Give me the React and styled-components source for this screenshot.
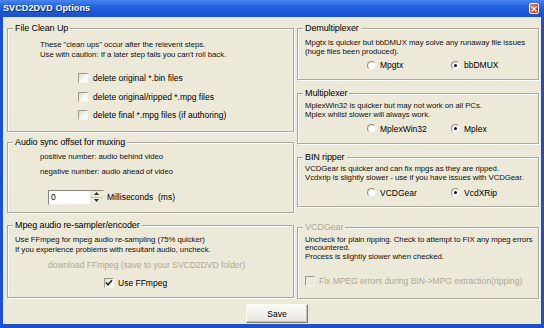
import React from 'react';
import styled, { createGlobalStyle } from 'styled-components';

const Global = createGlobalStyle`
  html, body { margin: 0; padding: 0; background: #ECE9D8; }
  body { font-family: "Liberation Sans", Arial, sans-serif; color: #000; }
  * { box-sizing: border-box; }
`;

const Window = styled.div`
  width: 544px;
  height: 328px;
  display: flex;
  flex-direction: column;
  background: #1B50D2;
`;

const TitleBar = styled.div`
  height: 17px;
  flex: none;
  display: flex;
  align-items: center;
  justify-content: space-between;
  padding: 0 5px 0 3px;
  background: linear-gradient(#4A86F0 0%, #2664DE 35%, #1C58D6 70%, #1A50CC 100%);
`;

const TitleText = styled.span`
  color: #fff;
  font-weight: bold;
  font-size: 9px;
  line-height: 11px;
  text-shadow: 1px 1px 0 #0F2E8A;
  letter-spacing: 0.1px;
`;

const CloseButton = styled.div`
  width: 10px;
  height: 11px;
  border: 1px solid #fff;
  border-radius: 2px;
  background: linear-gradient(135deg, #E9805F, #D5452A 60%, #C23A1E);
  display: flex;
  align-items: center;
  justify-content: center;
`;

const Frame = styled.div`
  flex: 1;
  display: flex;
  padding: 0 4px 4px 3px;
`;

const Body = styled.div`
  flex: 1;
  background: #ECE9D8;
  display: flex;
  flex-direction: column;
  padding: 11px 2px 0 4px;
`;

const Columns = styled.div`
  display: flex;
  gap: 3px;
  align-items: flex-start;
`;

const Column = styled.div`
  width: ${p => p.$w}px;
  display: flex;
  flex-direction: column;
`;

const Group = styled.div`
  position: relative;
  height: ${p => p.$h}px;
  margin-top: ${p => p.$mt || 0}px;
  border: 1px solid #ACA899;
  box-shadow: inset 1px 1px 0 #fff, 1px 1px 0 #fff;
  padding: ${p => p.$pad};
  display: flex;
  flex-direction: column;
  align-items: flex-start;
`;

const Legend = styled.span`
  position: absolute;
  top: -6px;
  left: 5px;
  padding: 0 2px;
  background: #ECE9D8;
  font-size: 9px;
  line-height: 11px;
  letter-spacing: -0.1px;
  color: ${p => (p.$disabled ? '#ACA899' : '#000')};
`;

const Desc = styled.div`
  font-size: 7.8px;
  line-height: ${p => p.$lh}px;
  letter-spacing: -0.05px;
  color: #111;
  white-space: nowrap;
`;

const LinkLine = styled.div`
  align-self: stretch;
  text-align: center;
  margin-top: ${p => p.$mt}px;
  font-size: 8.5px;
  line-height: 10px;
  color: #ACA899;
  white-space: nowrap;
`;

const CheckList = styled.div`
  display: flex;
  flex-direction: column;
  gap: 6.5px;
  margin: ${p => p.$m};
`;

const CheckRow = styled.label`
  display: flex;
  align-items: center;
  gap: ${p => p.$gap}px;
  height: 12px;
  margin: ${p => p.$m || 0};
  font-size: 8.5px;
  color: ${p => (p.$disabled ? '#ACA899' : '#000')};
  white-space: nowrap;
`;

const Box = styled.span`
  width: 10px;
  height: 10px;
  flex: none;
  border: 1px solid;
  border-color: #9C9A8E #F4F3EE #F4F3EE #9C9A8E;
  background: ${p => (p.$disabled ? '#ECE9D8' : 'linear-gradient(135deg, #DCD9CC, #F6F5F0 55%, #fff)')};
  display: flex;
  align-items: center;
  justify-content: center;
`;

const RadioRow = styled.div`
  display: flex;
  margin: ${p => p.$m};
`;

const RadioOption = styled.label`
  width: 84px;
  display: flex;
  align-items: center;
  gap: 4px;
  height: 11px;
  font-size: 8.5px;
  white-space: nowrap;
`;

const RadioDot = styled.span`
  width: 9px;
  height: 9px;
  flex: none;
  border-radius: 50%;
  border: 1px solid;
  border-color: #8E8C80 #F2F1EC #F2F1EC #8E8C80;
  background: radial-gradient(circle at 60% 60%, #fff 40%, #E6E4DA 100%);
  display: flex;
  align-items: center;
  justify-content: center;
  &::after {
    content: '';
    width: 3px;
    height: 3px;
    border-radius: 50%;
    background: ${p => (p.$on ? '#111' : 'transparent')};
  }
`;

const SpinRow = styled.div`
  display: flex;
  align-items: center;
  gap: 3px;
  margin: ${p => p.$m};
  font-size: 8.5px;
  white-space: nowrap;
`;

const SpinBox = styled.div`
  width: 56px;
  height: 15px;
  display: flex;
  border: 1px solid;
  border-color: #8A887C #EDEBE3 #EDEBE3 #8A887C;
  background: #fff;
`;

const SpinValue = styled.span`
  flex: 1;
  font-size: 8.5px;
  line-height: 13px;
  padding-left: 2px;
`;

const SpinButtons = styled.div`
  width: 13px;
  display: flex;
  flex-direction: column;
  background: #ECE9D8;
`;

const SpinHalf = styled.div`
  flex: 1;
  display: flex;
  align-items: center;
  justify-content: center;
  border-bottom: ${p => (p.$top ? '1px solid #C8C5B8' : 'none')};
`;

const ButtonRow = styled.div`
  display: flex;
  justify-content: center;
  margin-top: 5px;
`;

const SaveButton = styled.button`
  width: 62px;
  height: 19px;
  margin-left: 8px;
  padding: 0;
  font-family: "Liberation Sans", Arial, sans-serif;
  font-size: 8.5px;
  color: #000;
  border: 1px solid;
  border-color: #FBFAF6 #7C796D #7C796D #FBFAF6;
  box-shadow: inset -1px -1px 0 #C9C5B7;
  background: linear-gradient(#FAFAF6, #EFEDE5 70%, #E3E0D4);
`;

const Check = () => (
  <svg width="8" height="8" viewBox="0 0 8 8">
    <path d="M1 3.5 L3 5.8 L7 1.2" fill="none" stroke="#222" strokeWidth="1.6" />
  </svg>
);

const Arrow = ({ up }) => (
  <svg width="5" height="3" viewBox="0 0 5 3">
    <path d={up ? 'M0 3 L2.5 0 L5 3 Z' : 'M0 0 L2.5 3 L5 0 Z'} fill="#333" />
  </svg>
);

const Checkbox = ({ label, checked, disabled, gap = 5, m }) => (
  <CheckRow $gap={gap} $m={m} $disabled={disabled}>
    <Box $disabled={disabled}>{checked && <Check />}</Box>
    {label}
  </CheckRow>
);

const Radios = ({ options, selected, m }) => (
  <RadioRow $m={m}>
    {options.map(o => (
      <RadioOption key={o}>
        <RadioDot $on={o === selected} />
        {o}
      </RadioOption>
    ))}
  </RadioRow>
);

export default function App() {
  return (
    <>
      <Global />
      <Window>
        <TitleBar>
          <TitleText>SVCD2DVD Options</TitleText>
          <CloseButton>
            <svg width="6" height="6" viewBox="0 0 6 6">
              <path d="M0.5 0.5 L5.5 5.5 M5.5 0.5 L0.5 5.5" stroke="#fff" strokeWidth="1.4" />
            </svg>
          </CloseButton>
        </TitleBar>
        <Frame>
          <Body>
            <Columns>
              <Column $w={287}>
                <Group $h={104} $pad="11px 0 0 32px">
                  <Legend>File Clean Up</Legend>
                  <Desc $lh={10}>
                    These "clean ups" occur after the relevent steps.
                    <br />
                    Use with caution: If a later step fails you can't roll back.
                  </Desc>
                  <CheckList $m="12px 0 0 38px">
                    <Checkbox label="delete original *.bin files" />
                    <Checkbox label="delete original/ripped *.mpg files" />
                    <Checkbox label="delete final *.mpg files (if authoring)" />
                  </CheckList>
                </Group>
                <Group $h={71} $mt={10} $pad="6px 0 0 32px">
                  <Legend>Audio sync offset for muxing</Legend>
                  <Desc $lh={15}>
                    positive number: audio behind video
                    <br />
                    negative number: audio ahead of video
                  </Desc>
                  <SpinRow $m="10.5px 0 0 8px">
                    <SpinBox>
                      <SpinValue>0</SpinValue>
                      <SpinButtons>
                        <SpinHalf $top>
                          <Arrow up />
                        </SpinHalf>
                        <SpinHalf>
                          <Arrow />
                        </SpinHalf>
                      </SpinButtons>
                    </SpinBox>
                    Milliseconds&nbsp; (ms)
                  </SpinRow>
                </Group>
                <Group $h={73} $mt={12} $pad="9px 15px 0 7px">
                  <Legend>Mpeg audio re-sampler/encoder</Legend>
                  <Desc $lh={10}>
                    Use FFmpeg for mpeg audio re-sampling (75% quicker)
                    <br />
                    If you experience problems with resultant audio, uncheck.
                  </Desc>
                  <LinkLine $mt={5}>download FFmpeg (save to your SVCD2DVD folder)</LinkLine>
                  <Checkbox label="Use FFmpeg" checked gap={4} m="7px 0 0 89px" />
                </Group>
              </Column>
              <Column $w={242}>
                <Group $h={52} $pad="8.5px 0 0 7px">
                  <Legend>Demultiplexer</Legend>
                  <Desc $lh={9}>
                    Mpgtx is quicker but bbDMUX may solve any runaway file issues
                    <br />
                    (huge files been produced).
                  </Desc>
                  <Radios options={['Mpgtx', 'bbDMUX']} selected="bbDMUX" m="4px 0 0 62px" />
                </Group>
                <Group $h={51} $mt={13} $pad="6.5px 0 0 7px">
                  <Legend>Multiplexer</Legend>
                  <Desc $lh={9}>
                    MplexWin32 is quicker but may not work on all PCs.
                    <br />
                    Mplex whilst slower will always work.
                  </Desc>
                  <Radios options={['MplexWin32', 'Mplex']} selected="Mplex" m="4.5px 0 0 62px" />
                </Group>
                <Group $h={50} $mt={13} $pad="5.5px 0 0 7px">
                  <Legend>BIN ripper</Legend>
                  <Desc $lh={9}>
                    VCDGear is quicker and can fix mpgs as they are ripped.
                    <br />
                    Vcdxrip is slightly slower - use if you have issues with VCDGear.
                  </Desc>
                  <Radios options={['VCDGear', 'VcdXRip']} selected="VcdXRip" m="5.5px 0 0 62px" />
                </Group>
                <Group $h={72} $mt={20} $pad="7.5px 0 0 7px">
                  <Legend $disabled>VCDGear</Legend>
                  <Desc $lh={8.5}>
                    Uncheck for plain ripping. Check to attempt to FIX any mpeg errors
                    <br />
                    encountered.
                    <br />
                    Process is slightly slower when checked.
                  </Desc>
                  <Checkbox
                    label="Fix MPEG errors during BIN->MPG extraction(ripping)"
                    disabled
                    gap={4}
                    m="14px 0 0 0"
                  />
                </Group>
              </Column>
            </Columns>
            <ButtonRow>
              <SaveButton>Save</SaveButton>
            </ButtonRow>
          </Body>
        </Frame>
      </Window>
    </>
  );
}
